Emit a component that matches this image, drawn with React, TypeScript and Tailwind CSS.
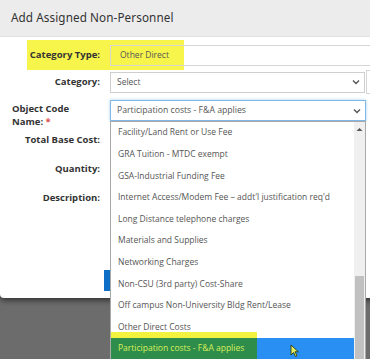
import React from "react";

const items = [
  "Facility/Land Rent or Use Fee",
  "GRA Tuition - MTDC exempt",
  "GSA-Industrial Funding Fee",
  "Internet Access/Modem Fee – addt'l justification req'd",
  "Long Distance telephone charges",
  "Materials and Supplies",
  "Networking Charges",
  "Non-CSU (3rd party) Cost-Share",
  "Off campus Non-University Bldg Rent/Lease",
  "Other Direct Costs",
];

function Chevron() {
  return (
    <svg width="8" height="6" viewBox="0 0 8 6" className="shrink-0">
      <path d="M1 1.5 L4 4.5 L7 1.5" fill="none" stroke="#555" strokeWidth="1.4" />
    </svg>
  );
}

export default function App() {
  return (
    <div
      className="relative w-[370px] h-[359px] overflow-hidden bg-[#6c6c6c]"
      style={{ fontFamily: '"Open Sans", "Noto Sans", sans-serif' }}
    >
      {/* modal */}
      <div className="w-[380px] h-[298px] bg-white rounded-bl-[4px] shadow-[0_2px_6px_rgba(0,0,0,0.6)] flex flex-col">
        <div className="h-[37px] bg-[#ececec] flex items-center pl-[11px] border-b border-[#e2e2e2]">
          <span className="text-[11.7px] text-[#333] tracking-[0.1px]" style={{ fontFamily: '"Noto Sans", sans-serif' }}>
            Add Assigned Non-Personnel
          </span>
        </div>
        <div className="flex flex-col pt-[3px]">
          {/* Category Type */}
          <div className="relative h-[30px] flex items-center">
            <div className="absolute left-[27px] top-0 w-[157px] h-[30px] bg-[#f7f44c]" />
            <div className="relative w-[100px] text-right pr-0 text-[9.5px] font-bold text-[#333]">Category Type:</div>
            <div className="relative ml-[10px] h-[21px] flex-1 border border-[#d6d6d6] border-r-0 flex items-center pl-[9px] text-[8.5px] text-[#555]">
              Other Direct
            </div>
          </div>
          {/* Category */}
          <div className="h-[28px] flex items-center -mt-[2px]">
            <div className="w-[100px] text-right text-[9.5px] font-bold text-[#333]">Category:</div>
            <div className="ml-[10px] h-[21px] w-[255px] border border-[#cfcfcf] flex items-center justify-between pl-[6px] pr-[4px] text-[8.5px] text-[#555]">
              <span>Select</span>
              <Chevron />
            </div>
            <div className="ml-[1px] h-[24px] flex-1 border border-[#d6d6d6] border-r-0" />
          </div>
          {/* Object Code */}
          <div className="h-[30px] flex items-start pt-[4px]">
            <div className="w-[100px] pl-[12px] text-[9.5px] font-bold text-[#333] leading-[13px] pt-[2px]">
              Object Code<br />Name: <span className="text-[#d9534f]">*</span>
            </div>
            <div className="ml-[10px] h-[21px] w-[256px] border border-[#7fb8e6] shadow-[0_0_3px_#a9d3f3] flex items-center justify-between pl-[6px] pr-[4px] text-[8.7px] text-[#555]">
              <span>Participation costs - F&amp;A applies</span>
              <Chevron />
            </div>
          </div>
          {/* other labels */}
          <div className="h-[29px] flex items-center">
            <div className="w-[100px] text-right text-[9.5px] font-bold text-[#333]">Total Base Cost:</div>
          </div>
          <div className="h-[29px] flex items-center">
            <div className="w-[100px] text-right text-[9.5px] font-bold text-[#333]">Quantity:</div>
          </div>
          <div className="h-[28px] flex items-center">
            <div className="w-[100px] text-right text-[9.5px] font-bold text-[#333]">Description:</div>
          </div>
          <div className="h-[58px]" />
          <div className="h-[21px] flex">
            <div className="ml-[104px] w-[70px] h-[21px] bg-[#0f6fc6]" />
          </div>
        </div>
      </div>

      {/* dropdown list */}
      <div className="absolute left-[110px] top-[121px] w-[256px] h-[250px] bg-white border border-[#a9a9a9] flex">
        <div className="flex-1 flex flex-col">
          {items.map((t) => (
            <div key={t} className="h-[21.6px] shrink-0 flex items-center pl-[7px] text-[8.5px] text-[#555] whitespace-nowrap">
              {t}
            </div>
          ))}
          <div className="relative h-[21.6px] shrink-0 flex items-center pl-[7px] text-[8.5px] bg-[#2a8ff3] text-white whitespace-nowrap">
            <div className="absolute left-0 -top-[6px] w-[146px] h-[6px] bg-[#f3f23e]" />
            <div className="absolute left-0 top-0 w-[146px] h-full bg-[#2e8d4a]" />
            <span className="relative text-[#d8ef5c]">Participation costs - F&amp;A applies</span>
            <svg className="absolute left-[179px] top-[6px]" width="9" height="13" viewBox="0 0 9 13">
              <path d="M1 1 L1 11 L3.5 8.5 L5.5 12.5 L7 11.8 L5 7.8 L8.3 7.8 Z" fill="#e8f060" stroke="#2a3a10" strokeWidth="0.9" />
            </svg>
          </div>
        </div>
        <div className="w-[11px] bg-[#f0f0f0] flex flex-col items-center">
          <svg className="mt-[5px]" width="7" height="5" viewBox="0 0 7 5">
            <path d="M0.5 4 L3.5 1 L6.5 4 Z" fill="#555" />
          </svg>
          <div className="mt-[144px] w-[9px] h-[90px] bg-[#c1c1c1]" />
        </div>
      </div>
    </div>
  );
}
